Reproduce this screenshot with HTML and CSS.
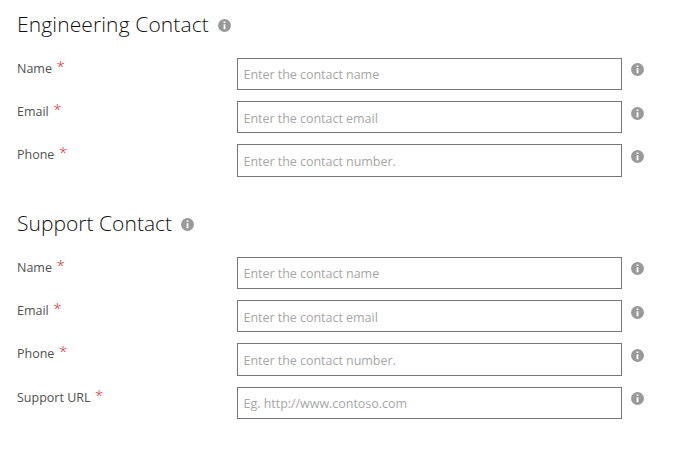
FILE: index.html
```html
<!DOCTYPE html>
<html lang="en">
<head>
<meta charset="utf-8">
<title>Contacts</title>
<link rel="stylesheet" href="styles.css">
</head>
<body>
<svg width="0" height="0" class="defs"><symbol id="info" viewBox="0 0 13 13"><circle cx="6.5" cy="6.5" r="6.5" fill="#999"/><path d="M5.6 2.4h1.8v1.7H5.6zM5.6 5.2h1.8v5H5.6z" fill="#fff"/></symbol></svg>
<form>
<section>
<h2><span class="title-engineering">Engineering Contact</span><svg class="info"><use href="#info"/></svg></h2>
<div class="row"><label for="en">Name<span class="req">*</span></label><input id="en" placeholder="Enter the contact name"><svg class="info"><use href="#info"/></svg></div>
<div class="row"><label for="ee">Email<span class="req">*</span></label><input id="ee" placeholder="Enter the contact email"><svg class="info"><use href="#info"/></svg></div>
<div class="row"><label for="ep">Phone<span class="req">*</span></label><input id="ep" placeholder="Enter the contact number."><svg class="info"><use href="#info"/></svg></div>
</section>
<section>
<h2><span class="title-support">Support Contact</span><svg class="info"><use href="#info"/></svg></h2>
<div class="row"><label for="sn">Name<span class="req">*</span></label><input id="sn" placeholder="Enter the contact name"><svg class="info"><use href="#info"/></svg></div>
<div class="row"><label for="se">Email<span class="req">*</span></label><input id="se" placeholder="Enter the contact email"><svg class="info"><use href="#info"/></svg></div>
<div class="row"><label for="sp">Phone<span class="req">*</span></label><input id="sp" placeholder="Enter the contact number."><svg class="info"><use href="#info"/></svg></div>
<div class="row"><label for="su">Support URL<span class="req">*</span></label><input id="su" placeholder="Eg. http://www.contoso.com"><svg class="info"><use href="#info"/></svg></div>
</section>
</form>
</body>
</html>
```
FILE: styles.css
```css
* { box-sizing: border-box; }
body { margin: 0; min-height: 453px; background: #fff; font-family: "Open Sans", "Noto Sans", sans-serif; }
.defs { display: none; }
form { padding: 7.6px 0 0 17px; }
section { min-height: 199px; }
h2 { display: flex; height: 50px; margin: 0; font-size: 21px; font-weight: 300; line-height: 32px; color: #111; }
h2 span { white-space: nowrap; }
.title-engineering { width: 201px; letter-spacing: 0.12px; }
.title-support { width: 164px; letter-spacing: 0.03px; }
.info { display: block; flex: none; width: 13px; height: 13px; }
h2 .info { margin-top: 11.4px; }
.row { display: grid; grid-template-columns: 220px 385px 13px; height: 32.33px; margin-bottom: 11px; }
.row .info { margin: 5.9px 0 0 9px; }
label { font-size: 12.5px; line-height: 22px; color: #505050; }
.req { position: relative; top: -1px; margin-left: 4.5px; color: #e81123; font-size: 15px; font-weight: 300; line-height: 1; }
input { width: 385px; height: 32.33px; margin: 0; padding: 2px 5.5px 0; border: 1px solid #767676; border-radius: 0; background: #fff; font: 12.5px "Open Sans", "Noto Sans", sans-serif; letter-spacing: -0.03px; outline: 0; }
input::placeholder { color: #a6a6a6; opacity: 1; }
```
